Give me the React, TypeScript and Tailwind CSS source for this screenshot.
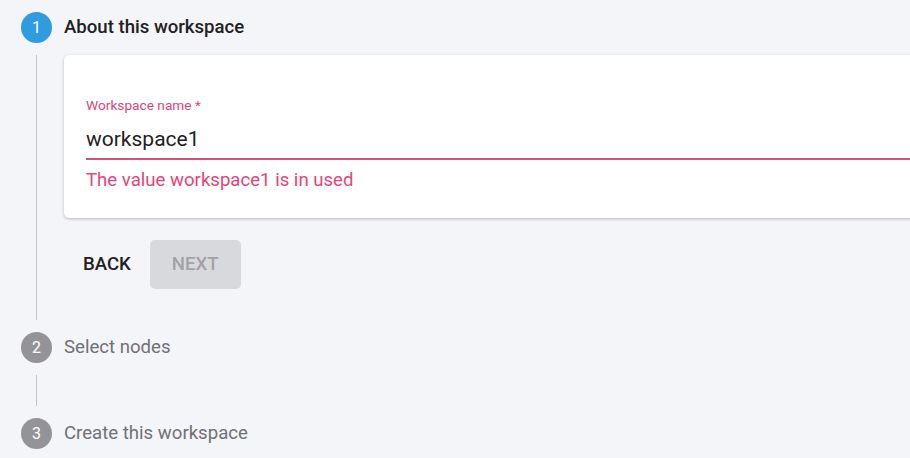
import type { ReactNode } from 'react'

function StepIcon({ n, active }: { n: number; active?: boolean }) {
  return (
    <div
      className={`w-[31px] h-[31px] rounded-full flex items-center justify-center text-white text-[16px] shrink-0 ${
        active ? 'bg-[#2f9be0]' : 'bg-[#949498]'
      }`}
    >
      {n}
    </div>
  )
}

function StepHeader({ n, label, active }: { n: number; label: string; active?: boolean }) {
  return (
    <div className="flex items-center">
      <StepIcon n={n} active={active} />
      <span
        className={`ml-[12px] text-[18.6px] ${
          active ? 'font-medium text-[#212121]' : 'text-[#707075]'
        }`}
      >
        {label}
      </span>
    </div>
  )
}

function Rail({ children, className = '' }: { children?: ReactNode; className?: string }) {
  return <div className={`ml-[15px] border-l border-[#c4c4c8] ${className}`}>{children}</div>
}

export default function App() {
  return (
    <div
      className="w-full h-[458px] overflow-hidden bg-[#f4f5f9] pl-[21px] pt-[12px]"
      style={{ fontFamily: 'Roboto, "Liberation Sans", sans-serif' }}
    >
      <StepHeader n={1} label="About this workspace" active />

      <Rail className="mt-[12px] pl-[27px] pb-[31px]">
        <div className="w-[880px] bg-white rounded-[5px] shadow-[0_1px_3px_rgba(0,0,0,0.25)] pl-[22px] pt-[42px] pb-[26px]">
          <div className="text-[13.7px] leading-[16px] text-[#e0457b]">Workspace name *</div>
          <div className="mt-[12px] text-[21px] leading-[28px] pb-[5px] text-[#212121] border-b-2 border-[#d6507c]">
            workspace1
          </div>
          <div className="mt-[8px] text-[18.6px] leading-[24px] text-[#e8437a]">
            The value workspace1 is in used
          </div>
        </div>

        <div className="mt-[22px] flex items-center">
          <button className="h-[49px] px-[19px] text-[18.6px] font-medium text-[#212121]">BACK</button>
          <button className="h-[49px] px-[22px] rounded-[5px] bg-[#d8d9dd] text-[18.6px] font-medium text-[#a2a2a6]">
            NEXT
          </button>
        </div>
      </Rail>

      <div className="mt-[12px]">
        <StepHeader n={2} label="Select nodes" />
      </div>
      <Rail className="mt-[12px] h-[31px]" />
      <div className="mt-[12px]">
        <StepHeader n={3} label="Create this workspace" />
      </div>
    </div>
  )
}
